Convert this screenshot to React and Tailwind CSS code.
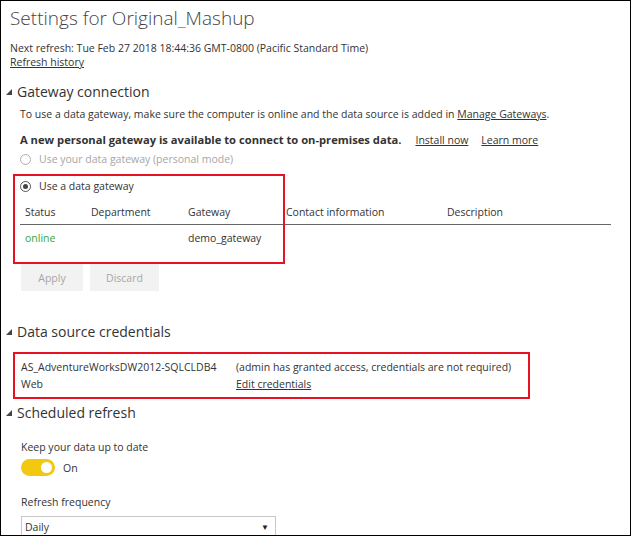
import React from "react";

const font = { fontFamily: '"Open Sans", "Noto Sans", sans-serif' };

function Tri() {
  return (
    <svg width="6" height="6" viewBox="0 0 6 6" className="shrink-0">
      <polygon points="6,0 6,6 0,6" fill="#444" />
    </svg>
  );
}

function Heading({ children, className = "" }) {
  return (
    <div className={`flex items-center h-[20px] pl-[5px] ${className}`}>
      <Tri />
      <span className="ml-[5px] text-[14px] leading-[20px] text-[#333]">{children}</span>
    </div>
  );
}

function Radio({ checked, disabled, children }) {
  return (
    <div className={`flex items-center h-[14px] ${disabled ? "text-[#a6a6a6]" : "text-[#333]"}`}>
      <span
        className={`w-[11px] h-[11px] rounded-full border flex items-center justify-center ${
          disabled ? "border-[#b0b0b0]" : "border-[#555]"
        }`}
      >
        {checked && <span className="w-[5px] h-[5px] rounded-full bg-[#444]" />}
      </span>
      <span className="ml-[8px]">{children}</span>
    </div>
  );
}

export default function App() {
  return (
    <div
      className="relative w-[631px] h-[536px] border border-black overflow-hidden bg-white text-[10.5px] leading-[14px] text-[#333]"
      style={font}
    >
      <div className="pl-[9px] pt-[3px] text-[19px] leading-[28px] font-light text-[#444]">
        Settings for Original_Mashup
      </div>
      <div className="pl-[9px] mt-[9px]">Next refresh: Tue Feb 27 2018 18:44:36 GMT-0800 (Pacific Standard Time)</div>
      <div className="pl-[9px]">
        <span className="underline">Refresh history</span>
      </div>

      <Heading className="mt-[13px]">Gateway connection</Heading>
      <div className="pl-[19px] mt-[5px]">
        To use a data gateway, make sure the computer is online and the data source is added in{" "}
        <span className="underline">Manage Gateways</span>.
      </div>
      <div className="pl-[19px] mt-[12px] flex">
        <span className="font-bold text-[11.2px]">A new personal gateway is available to connect to on-premises data.</span>
        <span className="underline ml-[14px]">Install now</span>
        <span className="underline ml-[13px]">Learn more</span>
      </div>
      <div className="pl-[19px] mt-[5px]">
        <Radio disabled>Use your data gateway (personal mode)</Radio>
      </div>
      <div className="pl-[19px] mt-[13px]">
        <Radio checked>Use a data gateway</Radio>
      </div>

      <div className="ml-[19px] mr-[19px] mt-[6px]">
        <div className="flex h-[26px] items-center pl-[5px] border-b border-[#666]">
          <span className="w-[66px]">Status</span>
          <span className="w-[97px]">Department</span>
          <span className="w-[98px]">Gateway</span>
          <span className="w-[161px]">Contact information</span>
          <span>Description</span>
        </div>
        <div className="flex h-[26px] items-center pl-[5px]">
          <span className="w-[66px] text-[#3ba53b]">online</span>
          <span className="w-[97px]"></span>
          <span className="w-[98px]">demo_gateway</span>
        </div>
      </div>

      <div className="pl-[20px] mt-[13px] flex gap-[7px]">
        <div className="w-[62px] h-[27px] bg-[#f2f2f2] text-[#a6a6a6] flex items-center justify-center">Apply</div>
        <div className="w-[69px] h-[27px] bg-[#f2f2f2] text-[#a6a6a6] flex items-center justify-center">Discard</div>
      </div>

      <Heading className="mt-[31px]">Data source credentials</Heading>

      <div className="ml-[12px] mt-[10px] w-[517px] h-[47px] border-2 border-[#e81123] flex flex-col justify-center pl-[6px]">
        <div className="flex">
          <span className="w-[215px]">AS_AdventureWorksDW2012-SQLCLDB4</span>
          <span>(admin has granted access, credentials are not required)</span>
        </div>
        <div className="flex mt-[3px]">
          <span className="w-[215px]">Web</span>
          <span className="underline">Edit credentials</span>
        </div>
      </div>

      <Heading className="mt-[4px]">Scheduled refresh</Heading>

      <div className="pl-[20px] mt-[17px]">Keep your data up to date</div>
      <div className="pl-[20px] mt-[5px] flex items-center">
        <div className="w-[34px] h-[17px] rounded-full bg-[#f2c811] flex items-center justify-end pr-[3px]">
          <span className="w-[11px] h-[11px] rounded-full bg-white" />
        </div>
        <span className="ml-[8px]">On</span>
      </div>

      <div className="pl-[20px] mt-[19px]">Refresh frequency</div>
      <div className="ml-[20px] mt-[7px] w-[255px] h-[24px] border border-[#c8c8c8] flex items-start justify-between pt-[3px] pl-[3px] pr-[6px]">
        <span>Daily</span>
        <span className="text-[8px] text-[#222]">▼</span>
      </div>

      <div className="absolute left-[12px] top-[173px] w-[272px] h-[90px] border-2 border-[#e81123] pointer-events-none" />
    </div>
  );
}
